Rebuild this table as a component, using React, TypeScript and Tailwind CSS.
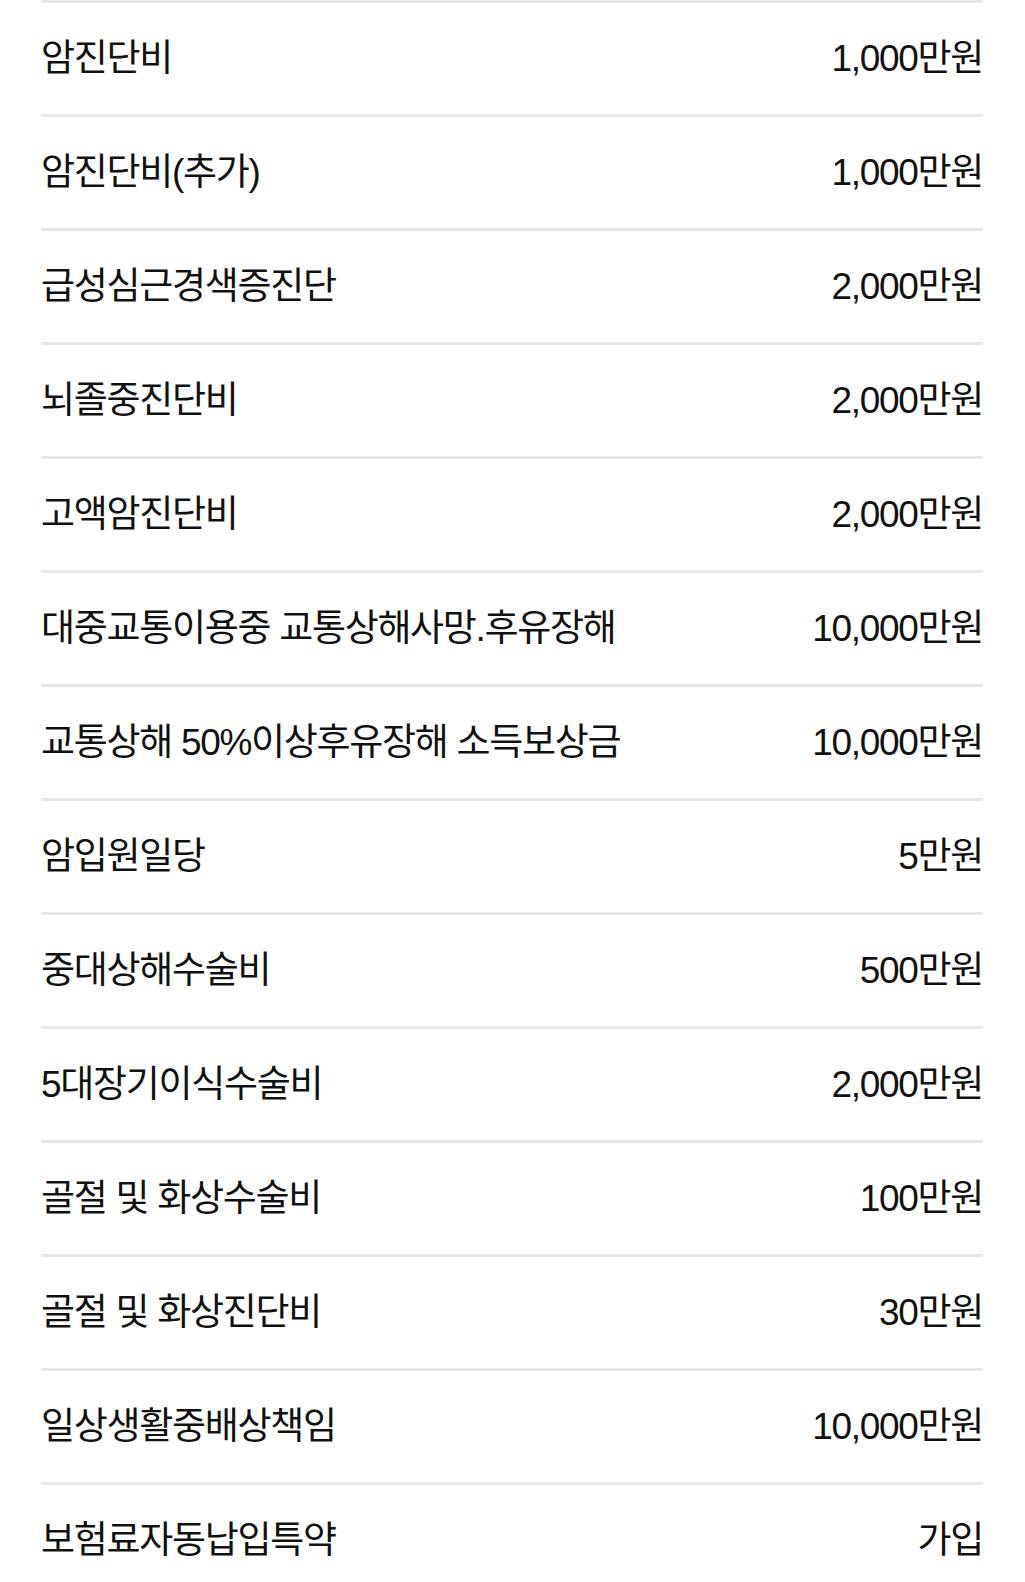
import React from "react";

const rows: [string, string][] = [
  ["암진단비", "1,000만원"],
  ["암진단비(추가)", "1,000만원"],
  ["급성심근경색증진단", "2,000만원"],
  ["뇌졸중진단비", "2,000만원"],
  ["고액암진단비", "2,000만원"],
  ["대중교통이용중 교통상해사망.후유장해", "10,000만원"],
  ["교통상해 50%이상후유장해 소득보상금", "10,000만원"],
  ["암입원일당", "5만원"],
  ["중대상해수술비", "500만원"],
  ["5대장기이식수술비", "2,000만원"],
  ["골절 및 화상수술비", "100만원"],
  ["골절 및 화상진단비", "30만원"],
  ["일상생활중배상책임", "10,000만원"],
  ["보험료자동납입특약", "가입"],
];

export default function App() {
  return (
    <div
      className="w-[1025px] h-[1582px] overflow-hidden bg-white pl-[41px] pr-[42px]"
      style={{ fontFamily: '"Liberation Sans", "Noto Sans CJK KR", sans-serif' }}
    >
      <div className="border-t-[3px] border-[#e6e6e6]">
        {rows.map(([label, value], i) => (
          <div
            key={i}
            className="flex h-[114px] items-center justify-between border-b-[3px] border-[#e6e6e6] text-[37px] tracking-[-1.3px] text-[#111111]"
          >
            <span>{label}</span>
            <span>{value}</span>
          </div>
        ))}
      </div>
    </div>
  );
}
